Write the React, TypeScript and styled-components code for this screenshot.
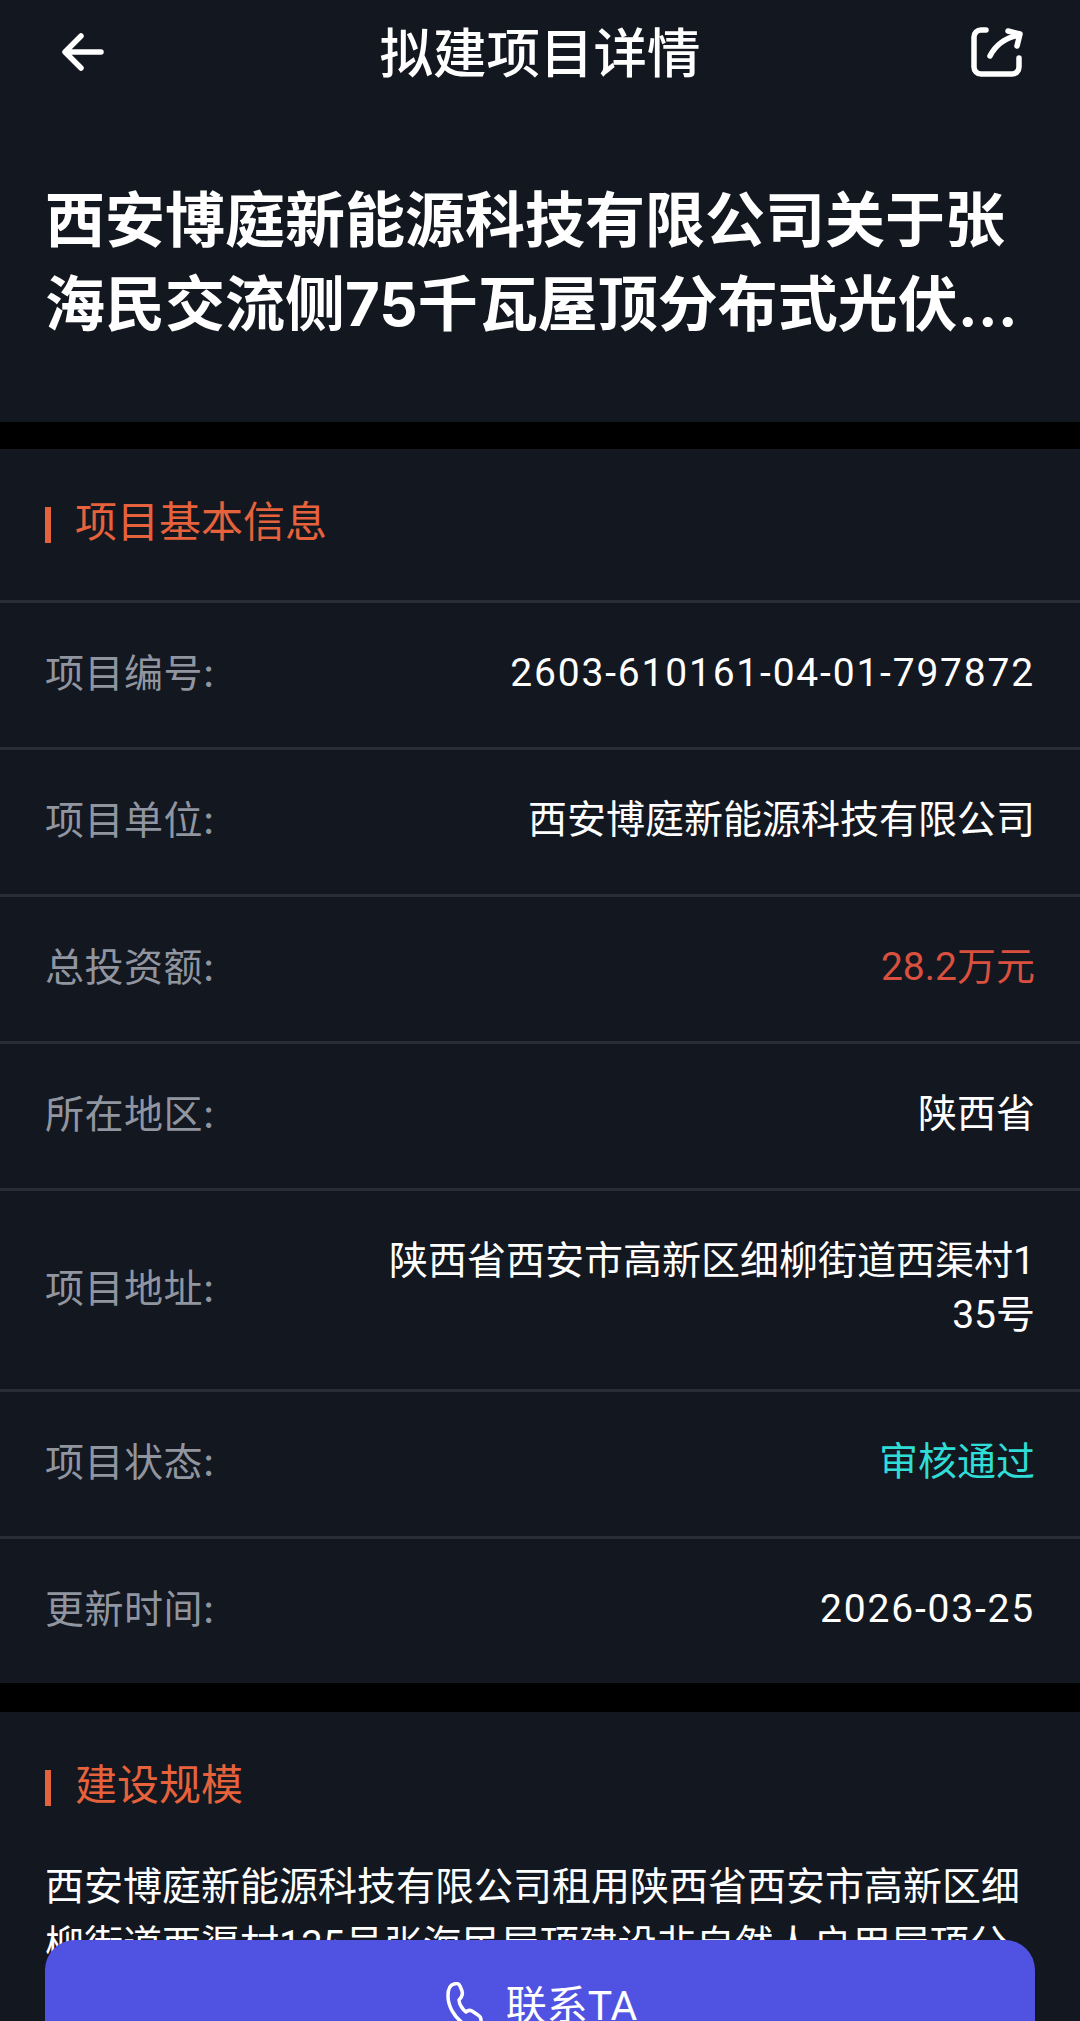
import React, { FunctionComponent } from 'react'
import styled, { createGlobalStyle } from 'styled-components'

const FONT = `Inter, "Noto Sans CJK SC", sans-serif`
const FONT_NUM = `Roboto, "Noto Sans CJK SC", sans-serif`

const GlobalStyle = createGlobalStyle`
  html, body {
    margin: 0;
    padding: 0;
    background: #000;
  }
  * { box-sizing: border-box; }
`

const Page = styled.div`
  position: relative;
  width: 1080px;
  height: 2021px;
  overflow: hidden;
  background: #000;
  font-family: ${FONT};
  color: #fff;
`

const Hero = styled.header`
  height: 422px;
  background: #13171f;
  padding: 0 45px;
`

const NavBar = styled.div`
  height: 104px;
  margin: 0 12px 0 17px;
  display: flex;
  align-items: center;
  justify-content: space-between;
`

const NavTitle = styled.h1`
  margin: 0;
  padding: 4px 0 0 5px;
  font-size: 53.5px;
  font-weight: 500;
  line-height: 104px;
`

const Headline = styled.h2`
  margin: 74px 0 0;
  font-size: 60px;
  font-weight: 700;
  line-height: 84px;
  white-space: nowrap;
`

const Card = styled.section<{ $gap: number }>`
  margin-top: ${(p) => p.$gap}px;
  background: #13171f;
`

const SectionHead = styled.div`
  height: 151px;
  padding-left: 45px;
  display: flex;
  align-items: center;
  gap: 24px;
  font-size: 42px;
  color: #e5623c;
`

const SectionTitle = styled.span`
  margin-bottom: 12px;
`

const Marker = styled.span`
  width: 6px;
  height: 36px;
  background: #e5623c;
`

const Row = styled.div`
  border-top: 3px solid #292d37;
  padding: 43px 45px 47px;
  display: flex;
  align-items: center;
  justify-content: space-between;
  font-size: 39px;
  line-height: 54px;
`

const Label = styled.span`
  color: #9095a0;
  letter-spacing: 0.5px;
  white-space: nowrap;
`

const Value = styled.span<{ $color?: string; $spaced?: boolean }>`
  width: 650px;
  font-family: ${FONT_NUM};
  text-align: right;
  color: ${(p) => p.$color || '#fff'};
  letter-spacing: ${(p) => (p.$spaced ? '1.8px' : '0')};
  word-break: break-all;
`

const Paragraph = styled.p`
  margin: -5px 0 0;
  padding: 0 45px;
  font-family: ${FONT_NUM};
  font-size: 39px;
  line-height: 58px;
`

const ContactButton = styled.div`
  position: absolute;
  left: 45px;
  top: 1940px;
  width: 990px;
  height: 130px;
  border-radius: 30px;
  background: #5052e2;
  display: flex;
  align-items: center;
  justify-content: center;
  gap: 22px;
  padding-left: 3px;
  font-family: ${FONT_NUM};
  font-size: 41px;
`

const ContactLabel = styled.span`
  margin-bottom: 7px;
`

const BackIcon = () => (
  <svg width="42" height="38" viewBox="0 0 42 38" fill="none" stroke="#fff" strokeWidth="5.5" strokeLinecap="round" strokeLinejoin="round">
    <path d="M39 19H4M19 3 3 19l16 16" />
  </svg>
)

const ShareIcon = () => (
  <svg width="52" height="50" viewBox="0 0 52 50" fill="none" stroke="#fff" strokeWidth="5.5" strokeLinecap="round" strokeLinejoin="round">
    <path d="M15 3H10a7 7 0 0 0-7 7v30a7 7 0 0 0 7 7h31a7 7 0 0 0 7-7v-9" />
    <path d="M19 29C24 19 33 11 48 8M37 4l12 3-3 12" />
  </svg>
)

const PhoneIcon = () => (
  <svg width="38" height="46" viewBox="0 0 38 46" fill="none" stroke="#fff" strokeWidth="3.5" strokeLinejoin="round">
    <path d="M8 2C3 3 2 8 2 14c0 10 6 21 16 28 6 3 13 3 16-1 2-3 1-6-2-8l-6-4c-2-1-4-1-6 1-3-2-7-8-7-12 3-3 4-6 3-9l-2-5C13 2 11 1 8 2Z" />
  </svg>
)

const rows: { label: string; value: string; color?: string; spaced?: boolean }[] = [
  { label: '项目编号:', value: '2603-610161-04-01-797872', spaced: true },
  { label: '项目单位:', value: '西安博庭新能源科技有限公司' },
  { label: '总投资额:', value: '28.2万元', color: '#d9503f' },
  { label: '所在地区:', value: '陕西省' },
  { label: '项目地址:', value: '陕西省西安市高新区细柳街道西渠村135号' },
  { label: '项目状态:', value: '审核通过', color: '#2fdcd6' },
  { label: '更新时间:', value: '2026-03-25', spaced: true }
]

const App: FunctionComponent = () => (
  <Page>
    <GlobalStyle />
    <Hero>
      <NavBar>
        <BackIcon />
        <NavTitle>拟建项目详情</NavTitle>
        <ShareIcon />
      </NavBar>
      <Headline>
        西安博庭新能源科技有限公司关于张
        <br />
        海民交流侧75千瓦屋顶分布式光伏...
      </Headline>
    </Hero>
    <Card $gap={27}>
      <SectionHead>
        <Marker />
        <SectionTitle>项目基本信息</SectionTitle>
      </SectionHead>
      {rows.map(({ label, value, color, spaced }) => (
        <Row key={label}>
          <Label>{label}</Label>
          <Value $color={color} $spaced={spaced}>{value}</Value>
        </Row>
      ))}
    </Card>
    <Card $gap={29}>
      <SectionHead>
        <Marker />
        <SectionTitle>建设规模</SectionTitle>
      </SectionHead>
      <Paragraph>
        西安博庭新能源科技有限公司租用陕西省西安市高新区细柳街道西渠村135号张海民屋顶建设非自然人户用屋顶分布式光伏发电项目。
      </Paragraph>
    </Card>
    <ContactButton>
      <PhoneIcon />
      <ContactLabel>联系TA</ContactLabel>
    </ContactButton>
  </Page>
)

export default App
